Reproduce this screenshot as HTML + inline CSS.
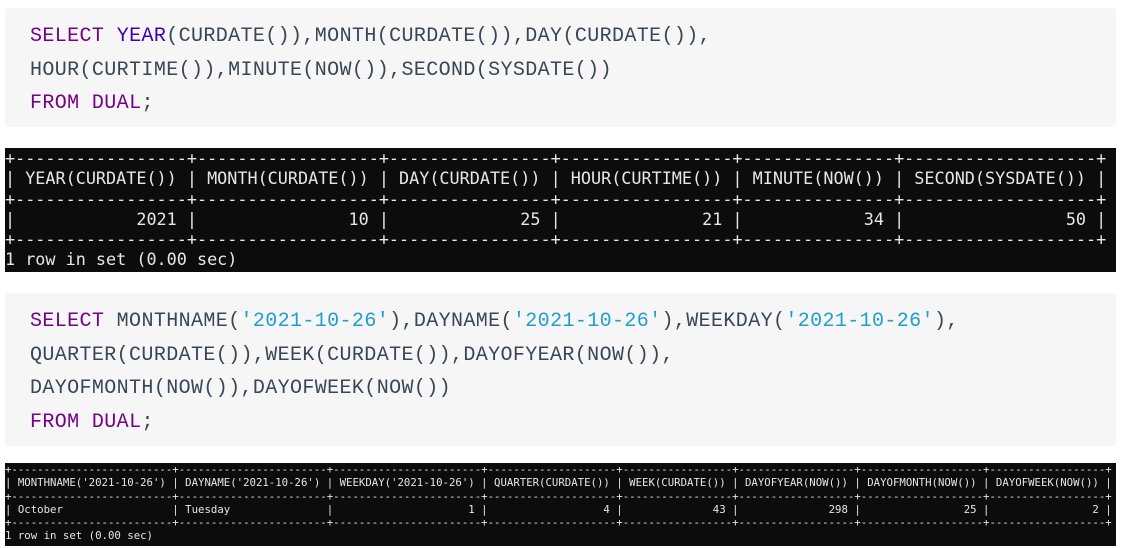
<!DOCTYPE html>
<html><head><meta charset="utf-8"><style>
body{margin:0;background:#fff;width:1121px;height:548px;overflow:hidden;position:relative}
.code{position:absolute;left:5px;width:1111px;background:#f6f6f6;border-radius:4px;box-sizing:border-box;padding-left:25px;font-family:"Liberation Mono",monospace;font-size:20px;letter-spacing:0.38px;line-height:33.5px;color:#3a4654;white-space:pre}
.k{color:#770088}.b{color:#3a00b3}.s{color:#1e9fd0}
.term{position:absolute;left:5px;width:1111px;background:#0c0c0c;color:#e6e6e6;font-family:"DejaVu Sans Mono","Liberation Mono",monospace;white-space:pre;overflow:hidden}
</style></head><body>
<div class="code" style="top:8px;height:119px;padding-top:12px"><span class="k">SELECT</span> <span class="b">YEAR</span>(CURDATE()),MONTH(CURDATE()),DAY(CURDATE()),
HOUR(CURTIME()),MINUTE(NOW()),SECOND(SYSDATE())
<span class="k">FROM</span> <span class="k">DUAL</span>;</div>
<div class="term" style="top:148px;height:124px;font-size:16.8px;line-height:20.3px;letter-spacing:0px">+-----------------+------------------+----------------+-----------------+---------------+-------------------+
| YEAR(CURDATE()) | MONTH(CURDATE()) | DAY(CURDATE()) | HOUR(CURTIME()) | MINUTE(NOW()) | SECOND(SYSDATE()) |
+-----------------+------------------+----------------+-----------------+---------------+-------------------+
|            2021 |               10 |             25 |              21 |            34 |                50 |
+-----------------+------------------+----------------+-----------------+---------------+-------------------+
1 row in set (0.00 sec)</div>
<div class="code" style="top:293px;height:153px;padding-top:12px"><span class="k">SELECT</span> MONTHNAME(<span class="s">'2021-10-26'</span>),DAYNAME(<span class="s">'2021-10-26'</span>),WEEKDAY(<span class="s">'2021-10-26'</span>),
QUARTER(CURDATE()),WEEK(CURDATE()),DAYOFYEAR(NOW()),
DAYOFMONTH(NOW()),DAYOFWEEK(NOW())
<span class="k">FROM</span> <span class="k">DUAL</span>;</div>
<div class="term" style="top:463px;height:83px;font-size:10.7px;line-height:13.3px">+-------------------------+-----------------------+-----------------------+--------------------+-----------------+------------------+-------------------+------------------+
| MONTHNAME('2021-10-26') | DAYNAME('2021-10-26') | WEEKDAY('2021-10-26') | QUARTER(CURDATE()) | WEEK(CURDATE()) | DAYOFYEAR(NOW()) | DAYOFMONTH(NOW()) | DAYOFWEEK(NOW()) |
+-------------------------+-----------------------+-----------------------+--------------------+-----------------+------------------+-------------------+------------------+
| October                 | Tuesday               |                     1 |                  4 |              43 |              298 |                25 |                2 |
+-------------------------+-----------------------+-----------------------+--------------------+-----------------+------------------+-------------------+------------------+
1 row in set (0.00 sec)</div>
</body></html>
